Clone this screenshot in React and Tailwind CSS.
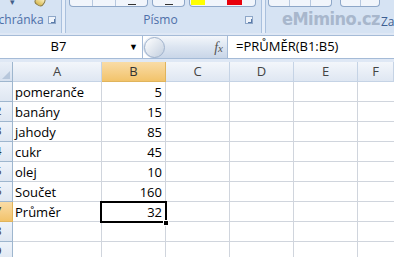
import React from "react";

const rows = [
  ["pomeranče", "5"],
  ["banány", "15"],
  ["jahody", "85"],
  ["cukr", "45"],
  ["olej", "10"],
  ["Součet", "160"],
  ["Průměr", "32"],
  ["", ""],
  ["", ""],
];

const cols = ["A", "B", "C", "D", "E", "F"];

function Launcher() {
  return (
    <div className="flex h-[8px] w-[8px] items-end justify-end border border-[#8ea7c8] bg-[#eef3fa]">
      <div className="h-[4px] w-[4px] border-b border-r border-[#5a7aa8]" />
    </div>
  );
}

function Ribbon() {
  return (
    <div className="flex h-[33px] bg-gradient-to-b from-[#dbe6f4] to-[#c9d9ee]">
      {/* Schránka */}
      <div className="flex w-[62px] flex-col justify-between overflow-hidden border-r border-[#a9c0dd] bg-[#d6e3f3]">
        <div className="flex items-start pl-[10px]">
          <span className="mt-[-3px] text-[9px] leading-[10px] text-[#445f88]">▾</span>
          <div className="ml-[20px] mt-[-4px] h-[10px] w-[10px] rotate-[30deg] rounded-sm border border-[#8c7a3c] bg-gradient-to-b from-[#fff6c9] to-[#d8b84a]" />
        </div>
        <div className="flex items-center justify-end pb-[6px] pr-[5px]">
          <span className="mr-auto ml-[-8px] text-[12px] leading-[14px] text-[#4d6fa8]">Schránka</span>
          <Launcher />
        </div>
      </div>
      <div className="w-[3px] bg-[#e6eef9]" />
      {/* Písmo */}
      <div className="flex w-[197px] flex-col justify-between border-x border-[#a9c0dd] bg-[#d6e3f3]">
        <div className="flex items-start gap-[4px] pl-[3px]">
          <div className="flex h-[7px] w-[79px] rounded-b-sm border border-t-0 border-[#8ea7c8] bg-[#f1f5fb]">
            <div className="w-[23px] border-r border-[#b7c8df]" />
            <div className="w-[23px] border-r border-[#b7c8df]" />
            <div className="flex flex-1 items-end justify-center">
              <div className="mb-[1px] h-[1px] w-[8px] bg-[#333]" />
            </div>
          </div>
          <div className="flex h-[7px] w-[33px] items-end justify-center rounded-b-sm border border-t-0 border-[#8ea7c8] bg-[#f1f5fb]">
            <div className="mb-[1px] h-[1px] w-[8px] bg-[#333]" />
          </div>
          <div className="flex h-[7px] w-[67px] gap-[22px] rounded-b-sm border border-t-0 border-[#8ea7c8] bg-[#f1f5fb] pl-[1px]">
            <div className="h-[5px] w-[14px] bg-[#ffff00]" />
            <div className="h-[5px] w-[15px] bg-[#e8000b]" />
          </div>
        </div>
        <div className="flex items-center pb-[6px] pr-[8px]">
          <span className="flex-1 pl-[10px] text-center text-[12px] leading-[14px] text-[#4d6fa8]">Písmo</span>
          <Launcher />
        </div>
      </div>
      <div className="w-[3px] bg-[#e6eef9]" />
      {/* Zarovnání */}
      <div className="flex flex-1 flex-col justify-between overflow-hidden border-l border-[#a9c0dd] bg-[#d6e3f3]">
        <div className="flex items-start gap-[8px] pl-[2px]">
          <div className="flex h-[7px] w-[64px] rounded-b-sm border border-t-0 border-[#8ea7c8] bg-[#f1f5fb]">
            <div className="w-[21px] border-r border-[#b7c8df]" />
            <div className="w-[21px] border-r border-[#b7c8df]" />
          </div>
          <div className="flex h-[7px] w-[40px] rounded-b-sm border border-t-0 border-[#8ea7c8] bg-[#f1f5fb]">
            <div className="w-[20px] border-r border-[#b7c8df]" />
          </div>
        </div>
        <div className="flex items-end pb-[3px] pl-[16px]">
          <span className="font-['DejaVu_Sans_Condensed','DejaVu_Sans',sans-serif] text-[18px] font-bold leading-[22px] tracking-[-0.5px] text-[#a8b7cc]">
            eMimino.cz
          </span>
          <span className="ml-[1px] text-[12px] leading-[16px] text-[#3d5f92]">Za</span>
        </div>
      </div>
    </div>
  );
}

function FormulaBar() {
  return (
    <div className="flex h-[29px] flex-col bg-[#dfe8f5] pt-[2px]">
      <div className="flex h-[24px] border-y border-[#a5bbd7] bg-white">
        <div className="flex w-[143px] items-center border-r border-[#a5bbd7]">
          <span className="flex-1 pr-[12px] text-center text-[13px]">B7</span>
          <span className="pr-[4px] text-[9px] text-black">▼</span>
        </div>
        <div className="flex w-[84px] items-center rounded-l-full bg-gradient-to-b from-[#f4f7fb] via-[#dce5f1] to-[#c9d6e8]">
          <div className="ml-[1px] h-[21px] w-[21px] rounded-full border border-[#9fb2cc] bg-gradient-to-br from-[#ffffff] to-[#c3cfdf]" />
          <span className="ml-auto pr-[4px] font-['Liberation_Serif',serif] text-[14px] italic text-[#555]">
            f<span className="text-[11px]">x</span>
          </span>
        </div>
        <div className="flex flex-1 items-center border-l border-[#a5bbd7] pl-[8px] text-[13px]">
          =PRŮMĚR(B1:B5)
        </div>
      </div>
    </div>
  );
}

function Sheet() {
  return (
    <div className="relative">
      <div className="grid grid-cols-[13px_89px_64px_64px_64px_64px_1fr] text-[13px]">
        <div className="flex h-[20px] items-end justify-end border-b border-r border-[#9eb6ce] bg-gradient-to-b from-[#e9eff8] to-[#d7e1ef]">
          <div className="mb-[2px] mr-[2px] h-0 w-0 border-b-[8px] border-l-[8px] border-b-[#b7c7dc] border-l-transparent" />
        </div>
        {cols.map((c) => (
          <div
            key={c}
            className={
              c === "B"
                ? "flex h-[20px] items-center justify-center border-b border-r border-[#e0b45c] bg-gradient-to-b from-[#f9dca6] to-[#f2c36a] text-[#333]"
                : "flex h-[20px] items-center justify-center border-b border-r border-[#c5d3e5] bg-gradient-to-b from-[#f3f6fb] to-[#dfe7f2] text-[#444]"
            }
          >
            {c}
          </div>
        ))}
        {rows.map((r, i) => (
          <React.Fragment key={i}>
            <div
              className={
                i === 6
                  ? "flex h-[20px] items-center justify-end overflow-hidden border-b border-r border-[#e0b45c] bg-gradient-to-b from-[#f9dca6] to-[#f2c36a]"
                  : "flex h-[20px] items-center justify-end overflow-hidden border-b border-r border-[#9eb6ce] bg-gradient-to-b from-[#eef3fa] to-[#dfe7f2]"
              }
            >
              <div className="w-[27px] shrink-0 text-center text-[11px] text-[#333]">{i + 1}</div>
            </div>
            <div className="flex h-[20px] items-end border-b border-r border-[#d0d5dd] pl-[2px] leading-[18px]">
              {r[0]}
            </div>
            <div className="flex h-[20px] items-end justify-end border-b border-r border-[#d0d5dd] pr-[3px] leading-[18px]">
              {r[1]}
            </div>
            <div className="h-[20px] border-b border-r border-[#d0d5dd]" />
            <div className="h-[20px] border-b border-r border-[#d0d5dd]" />
            <div className="h-[20px] border-b border-r border-[#d0d5dd]" />
            <div className="h-[20px] border-b border-[#d0d5dd]" />
          </React.Fragment>
        ))}
      </div>
      {/* active cell B7 */}
      <div className="absolute left-[100px] top-[139px] h-[22px] w-[67px] border-2 border-black" />
      <div className="absolute left-[163px] top-[158px] h-[6px] w-[6px] border border-white bg-black" />
    </div>
  );
}

export default function App() {
  return (
    <div className="h-[257px] w-[394px] overflow-hidden bg-white font-['Open_Sans','Liberation_Sans',sans-serif] text-black">
      <Ribbon />
      <FormulaBar />
      <Sheet />
    </div>
  );
}
